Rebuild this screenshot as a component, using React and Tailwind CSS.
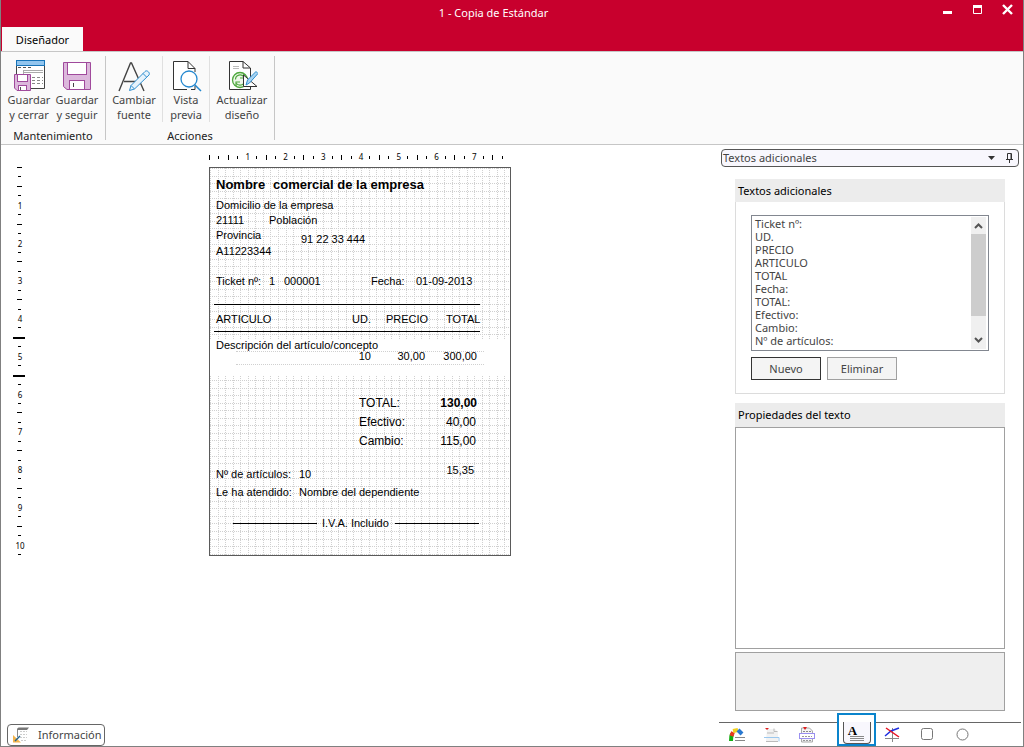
import { clsx } from 'clsx'

const MM = 3.775

const TICKET_ITEMS = [
  { text: 'Nombre', x: 6, y: 9, className: 'text-[13px] font-bold' },
  { text: 'comercial de la empresa', x: 63, y: 9, className: 'text-[13px] font-bold' },
  { text: 'Domicilio de la empresa', x: 6, y: 30 },
  { text: '21111', x: 6, y: 45 },
  { text: 'Población', x: 59, y: 45 },
  { text: 'Provincia', x: 6, y: 60 },
  { text: '91 22 33 444', x: 91, y: 64 },
  { text: 'A11223344', x: 6, y: 76 },
  { text: 'Ticket nº:', x: 6, y: 106 },
  { text: '1', x: 59, y: 106 },
  { text: '000001', x: 74, y: 106 },
  { text: 'Fecha:', x: 161, y: 106 },
  { text: '01-09-2013', x: 206, y: 106 },
  { text: 'ARTICULO', x: 6, y: 144 },
  { text: 'UD.', x: 142, y: 144 },
  { text: 'PRECIO', x: 176, y: 144 },
  { text: 'TOTAL', x: 236, y: 144 },
  { text: 'Descripción del artículo/concepto', x: 6, y: 170 },
  { text: '10', right: 139, y: 181 },
  { text: '30,00', right: 85, y: 181 },
  { text: '300,00', right: 33, y: 181 },
  { text: 'TOTAL:', x: 149, y: 228, className: 'text-[12px]' },
  { text: '130,00', right: 33, y: 228, className: 'text-[12px] font-bold' },
  { text: 'Efectivo:', x: 149, y: 247, className: 'text-[12px]' },
  { text: '40,00', right: 34, y: 247, className: 'text-[12px]' },
  { text: 'Cambio:', x: 149, y: 266, className: 'text-[12px]' },
  { text: '115,00', right: 34, y: 266, className: 'text-[12px]' },
  { text: '15,35', right: 36, y: 295 },
  { text: 'Nº de artículos:', x: 6, y: 299 },
  { text: '10', x: 89, y: 299 },
  { text: 'Le ha atendido:', x: 6, y: 317 },
  { text: 'Nombre del dependiente', x: 89, y: 317 },
  { text: 'I.V.A. Incluido', x: 112, y: 348 },
]

const TICKET_LINES = [
  { x: 4, y: 136, width: 266 },
  { x: 4, y: 163, width: 266 },
  { x: 23, y: 355, width: 84 },
  { x: 185, y: 355, width: 84 },
]

const TEXTS = [
  'Ticket nº:',
  'UD.',
  'PRECIO',
  'ARTICULO',
  'TOTAL',
  'Fecha:',
  'TOTAL:',
  'Efectivo:',
  'Cambio:',
  'Nº de artículos:',
]

function SaveCloseIcon() {
  return (
    <svg width="32" height="32" viewBox="0 0 32 32" fill="none">
      <path d="M3.5 5V28.5H31.5V5" fill="#fff" stroke="#444" />
      <rect x="3.5" y="0.5" width="28" height="5" fill="#92c5ee" stroke="#1874b8" />
      <path d="M5 7.5h3m2 0h3m2 0h3" stroke="#555" />
      <path d="M10 10.5H30M10 12.5H30M10.5 10V15" stroke="#aaa" />
      <path d="M19 17.5h3m2 0h3m2 0h1M19 20.5h3m2 0h3m2 0h1M19 23.5h3m2 0h3m2 0h1" stroke="#888" />
      <path d="M1.5 14.5H17.5V30.5H4L1.5 28Z" fill="#dcb8dc" stroke="#a04a9c" />
      <rect x="4.5" y="14.5" width="10" height="7" fill="#fff" stroke="#a04a9c" />
      <rect x="5.5" y="25.5" width="8" height="5" fill="#fff" stroke="#a04a9c" />
      <path d="M7.5 27v3" stroke="#555" />
    </svg>
  )
}

function SaveIcon() {
  return (
    <svg width="32" height="32" viewBox="0 0 32 32" fill="none">
      <path d="M2.5 2.5H29.5V29.5H6L2.5 26.5Z" fill="#dcb8dc" stroke="#a04a9c" />
      <rect x="6.5" y="2.5" width="19" height="12" fill="#fff" stroke="#a04a9c" />
      <rect x="8.5" y="20.5" width="15" height="9" fill="#fff" stroke="#a04a9c" />
      <path d="M12.5 23v4" stroke="#444" />
    </svg>
  )
}

function FontIcon() {
  return (
    <svg width="32" height="32" viewBox="0 0 32 32" fill="none">
      <path d="M1 31L12.5 3h1L26 31M6 21.5H20" stroke="#444" strokeWidth="1.4" />
      <path d="M11.5 30.5L13 25.500 27 11.500c1.500-2 5.500 1 4 3.500L16.500 29Z" fill="#e6f3fc" stroke="#2f8fd0" />
      <path d="M13 25.500l3.500 3.500M25 13.500l3.500 3.500" stroke="#2f8fd0" />
    </svg>
  )
}

function PreviewIcon() {
  return (
    <svg width="32" height="32" viewBox="0 0 32 32" fill="none">
      <path d="M17 29.5H3.5V1.5H18L25 8.5V12M25 26v3.5H21" fill="#fff" stroke="#333" />
      <path d="M18 1.5V8.5H25" stroke="#333" />
      <circle cx="19" cy="19" r="8" fill="#fff" stroke="#2488cf" strokeWidth="1.3" />
      <path d="M24.5 24.5L31 31" stroke="#2488cf" strokeWidth="1.5" />
    </svg>
  )
}

function RefreshIcon() {
  return (
    <svg width="32" height="32" viewBox="0 0 32 32" fill="none">
      <path d="M20 29.5H3.5V1.5H17L24.5 8V17" fill="#fff" stroke="#333" />
      <path d="M17 1.5V8h7" stroke="#333" />
      <path d="M7 6.5h6M7 8.5h6" stroke="#bbb" />
      <circle cx="14" cy="20" r="7.5" fill="#eef7ea" stroke="#4ea83d" strokeWidth="1.3" />
      <path d="M9.500 19.500c0-5 6-6 8.500-2.500M18 14v4h-4M18.500 21c0 4.500-6 5.500-8.500 2M10 26v-4h4" stroke="#4ea83d" strokeWidth="1.2" />
      <path d="M17.5 15V26.5H31Z" fill="#fff" stroke="#333" />
      <path d="M20 25l1.500-5L30 11.500l2 2L23.500 23Z" fill="#a8d3f2" stroke="#2f8fd0" />
      <path d="M18 29.5h6.500V26" stroke="#333" />
    </svg>
  )
}

function InfoIcon() {
  return (
    <svg width="18" height="18" viewBox="0 0 18 18" fill="none">
      <path d="M5 4c0-2 1-2.500 3-2.500h9L15 4Z" fill="#777" />
      <path d="M5.5 4V11" stroke="#888" />
      <path d="M8 5.5h7M8 8.5h7M8 11.5h7M9 14.5h6" stroke="#ccc" strokeDasharray="2 1" />
      <path d="M1 9v7.500h8Z" fill="#f3b44c" />
      <path d="M3 15l5-5" stroke="#23648f" strokeWidth="1.5" />
    </svg>
  )
}

function RibbonButton({ icon, lines, className }) {
  return (
    <button
      type="button"
      className={clsx('flex h-[66px] flex-col items-center pt-1 text-[#444]', className)}
    >
      {icon}
      <span className="leading-[15px]">
        {lines[0]}
        <br />
        {lines[1]}
      </span>
    </button>
  )
}

function RibbonGroup({ label, className, children }) {
  return (
    <section className={clsx('flex flex-col items-center border-r border-[#c6c6c6]', className)}>
      <div className="flex">{children}</div>
      <h2 className="mt-1.5 leading-[15px] text-[#222]">{label}</h2>
    </section>
  )
}

function TitleBar() {
  return (
    <header className="flex h-[51px] flex-col justify-between bg-[#c8002d]">
      <div className="flex items-start text-white">
        <h1 className="flex-1 pl-11 pt-[5px] text-center leading-4">1 - Copia de Estándar</h1>
        <div className="flex gap-[19px] pr-2.5 pt-1">
          <button type="button" aria-label="Minimizar">
            <svg width="11" height="11">
              <rect x="1" y="7" width="9" height="3" fill="#fff" />
            </svg>
          </button>
          <button type="button" aria-label="Maximizar">
            <svg width="11" height="11" fill="none">
              <path d="M1.5 1.5h8v8h-8z" stroke="#fff" />
              <path d="M1 2.5h9" stroke="#fff" strokeWidth="3" />
            </svg>
          </button>
          <button type="button" aria-label="Cerrar">
            <svg width="11" height="11" fill="none">
              <path d="M1 1l9 9M10 1l-9 9" stroke="#fff" strokeWidth="2.4" />
            </svg>
          </button>
        </div>
      </div>
      <nav className="flex">
        <button type="button" className="ml-px h-[24px] w-[81px] bg-[#fafafa] pt-0.5 text-black">
          Diseñador
        </button>
      </nav>
    </header>
  )
}

function Ribbon() {
  return (
    <div className="flex h-[94px] border-b border-t border-[#c6c6c6] bg-[#fafafa] py-1">
      <RibbonGroup label="Mantenimiento" className="px-1">
        <RibbonButton icon={<SaveCloseIcon />} lines={['Guardar', 'y cerrar']} className="w-[48px]" />
        <RibbonButton icon={<SaveIcon />} lines={['Guardar', 'y seguir']} className="w-[48px]" />
      </RibbonGroup>
      <RibbonGroup label="Acciones">
        <RibbonButton icon={<FontIcon />} lines={['Cambiar', 'fuente']} className="w-[57px] border-r border-[#e0e0e0]" />
        <RibbonButton icon={<PreviewIcon />} lines={['Vista', 'previa']} className="w-[47px] border-r border-[#e0e0e0]" />
        <RibbonButton icon={<RefreshIcon />} lines={['Actualizar', 'diseño']} className="w-[64px]" />
      </RibbonGroup>
    </div>
  )
}

function HorizontalRuler() {
  const ticks = Array.from({ length: 32 }, (_, i) => i)
  return (
    <svg className="block" width="302" height="12" fontFamily="Noto Sans, sans-serif" fontSize="8">
      {ticks.map(i => {
        const x = Math.round(i * 2.5 * MM)
        if (i % 4 === 0 && i > 0) {
          return null
        }
        return i % 2 === 0
          ? <rect key={i} x={x} y="3" width="1" height="5" />
          : <rect key={i} x={x} y="4" width="1" height="3" />
      })}
      {[1, 2, 3, 4, 5, 6, 7].map(n => (
        <text key={n} x={n * 10 * MM + 1} y="8" textAnchor="middle">{n}</text>
      ))}
    </svg>
  )
}

function VerticalRuler() {
  const ticks = Array.from({ length: 42 }, (_, i) => i)
  return (
    <svg className="block" width="14" height="392" fontFamily="Noto Sans, sans-serif" fontSize="8">
      {ticks.map(i => {
        const y = Math.round(i * 2.5 * MM)
        if (i % 4 === 0 && i > 0) {
          return null
        }
        if (i === 18 || i === 22) {
          return <rect key={i} x="0" y={y} width="12" height="2" />
        }
        return i % 2 === 0
          ? <rect key={i} x="4" y={y} width="5" height="1" />
          : <rect key={i} x="5" y={y} width="3" height="1" />
      })}
      {[1, 2, 3, 4, 5, 6, 7, 8, 9, 10].map(n => (
        <text key={n} x="7" y={n * 10 * MM + 4} textAnchor="middle">{n}</text>
      ))}
    </svg>
  )
}

function GridLines({ top, height, firstRow }) {
  const cols = Array.from({ length: 40 }, (_, i) => Math.round(i * 2 * MM) + 0.5)
  const rows = Array.from(
    { length: Math.ceil((height - firstRow) / (2 * MM)) },
    (_, i) => firstRow + Math.round(i * 2 * MM) + 0.5,
  )
  return (
    <svg className="absolute left-0" style={{ top }} width="300" height={height} stroke="#d0d0d0" strokeDasharray="1 1">
      {cols.map(x => <line key={x} x1={x} x2={x} y1="0" y2={height} />)}
      {rows.map(y => <line key={y} y1={y} y2={y} x1="0" x2="300" />)}
    </svg>
  )
}

function Ticket() {
  return (
    <div className="relative h-[389px] w-[302px] border border-[#5a5a5a] bg-white font-['Liberation_Sans',sans-serif] text-[11px] leading-[15px] text-black">
      <GridLines top={0} height={171} firstRow={0} />
      <GridLines top={208} height={179} firstRow={4} />
      <div className="absolute left-[26px] top-[183px] h-[14px] w-[248px] border-y border-dotted border-[#d0d0d0]" />
      {TICKET_LINES.map(line => (
        <div
          key={`${line.x}-${line.y}`}
          className="absolute h-px bg-black"
          style={{ left: line.x, top: line.y, width: line.width }}
        />
      ))}
      {TICKET_ITEMS.map(item => (
        <span
          key={`${item.text}-${item.y}`}
          className={clsx('absolute whitespace-pre', item.className)}
          style={{ left: item.x, right: item.right, top: item.y }}
        >
          {item.text}
        </span>
      ))}
    </div>
  )
}

function ScrollArrow({ down }) {
  return (
    <svg width="15" height="17" fill="none" stroke="#555" strokeWidth="2">
      <path d={down ? 'M4 6l3.500 3.500L11 6' : 'M4 11l3.500-3.500L11 11'} />
    </svg>
  )
}

function TextsPanel() {
  return (
    <section className="border border-[#dcdcdc]">
      <h3 className="-mx-px -mt-px h-[23px] bg-[#ececec] pl-[3px] leading-[23px] text-black">Textos adicionales</h3>
      <div className="px-[15px] py-[13px]">
        <div className="flex h-[136px] border border-[#828790] bg-white py-px pl-px pr-0.5">
          <ul className="flex-1 pl-0.5 leading-[13px] text-[#444]">
            {TEXTS.map(text => <li key={text}>{text}</li>)}
          </ul>
          <div className="flex w-[15px] flex-col bg-[#f0f0f0]">
            <ScrollArrow />
            <div className="h-[82px] bg-[#cdcdcd]" />
            <div className="mt-auto">
              <ScrollArrow down />
            </div>
          </div>
        </div>
        <div className="mt-1.5 flex gap-1.5">
          <button type="button" className="h-[23px] w-[70px] border border-[#333] bg-[#f4f4f4] pt-px">Nuevo</button>
          <button type="button" className="h-[23px] w-[70px] border border-[#a0a0a0] bg-[#f4f4f4] pt-px">Eliminar</button>
        </div>
      </div>
    </section>
  )
}

function ToolTabs() {
  return (
    <nav className="mr-0.5 flex h-6 items-start border-t border-[#666] pl-[9px]">
      <button type="button" aria-label="Datos" className="w-[35px] pt-1">
        <svg width="18" height="16" fill="none">
          <path d="M3 14c0-3 0-5 1-7" stroke="#12b012" strokeWidth="4" />
          <path d="M3.500 9L5 5" stroke="#e83a20" strokeWidth="4" />
          <path d="M5 4l5-1" stroke="#f0d020" strokeWidth="4" />
          <path d="M10 3l4 4" stroke="#2878d0" strokeWidth="4" />
          <path d="M7 10.5h10M7 13.5h10" stroke="#888" />
        </svg>
      </button>
      <button type="button" aria-label="Cabecera" className="w-[35px] pt-1">
        <svg width="18" height="16" fill="none">
          <path d="M4 2h8l3 3v9H3" fill="#f2f2f2" />
          <path d="M2 1h4l-2 2Z" fill="#e02020" />
          <path d="M11 1.5v3h3.500M4 6h7" stroke="#bbb" />
          <path d="M1 10.5h15v4" stroke="#9cc8ee" />
          <path d="M3 14.5h12" stroke="#bbb" />
        </svg>
      </button>
      <button type="button" aria-label="Sección" className="w-[39px] pt-1">
        <svg width="18" height="16" fill="none">
          <path d="M3.5 1V15h11V4l-3-3Z" fill="#f4f4f4" stroke="#aaa" />
          <path d="M5 0h4L7 3Z" fill="#e02020" />
          <path d="M5 4.5h8" stroke="#888" strokeDasharray="2 1" />
          <rect x="1.5" y="6.5" width="15" height="5" fill="#fff" stroke="#9a90f0" />
          <path d="M4 9.5h10M5 13.5h8" stroke="#999" strokeDasharray="2 1" />
        </svg>
      </button>
      <button
        type="button"
        aria-label="Textos"
        className="-mt-[10px] flex h-[33px] w-[39px] justify-center border-2 border-[#0a84cc] bg-white pt-[7px]"
      >
        <span className="flex h-[22px] w-7 flex-col items-center rounded-b border-x border-b border-[#555] bg-[#f8f7fd] pt-1 font-['Liberation_Serif',serif] text-[13px] font-bold leading-[10px] text-black">
          <span className="pr-2">A</span>
          <svg width="14" height="6" stroke="#888">
            <path d="M0 .5h14M0 2.5h14M0 4.5h14" />
          </svg>
        </span>
      </button>
      <button type="button" aria-label="Línea" className="ml-2 w-[37px] pt-1">
        <svg width="16" height="16" fill="none">
          <path d="M8.5 1v14M1 11.5h14" stroke="#888" />
          <path d="M1 9l6-5 8-3" stroke="#2030e0" strokeWidth="1.5" />
          <path d="M2 1l13 9" stroke="#e81020" strokeWidth="1.5" />
        </svg>
      </button>
      <button type="button" aria-label="Rectángulo" className="w-[35px] pt-[5px]">
        <svg width="13" height="13" fill="none">
          <rect x=".5" y=".5" width="11" height="11" rx="2" stroke="#777" />
        </svg>
      </button>
      <button type="button" aria-label="Elipse" className="pt-[5px]">
        <svg width="13" height="13" fill="none">
          <circle cx="6.5" cy="6.5" r="5.5" stroke="#777" />
        </svg>
      </button>
    </nav>
  )
}

function SidePanel() {
  return (
    <aside className="flex w-[304px] flex-col text-[#444]">
      <div className="ml-0.5 mr-1 mt-1 flex h-[18px] items-center rounded-sm border border-[#555] bg-[#f8f7fd] pl-px pr-[3px]">
        <h2 className="flex-1">Textos adicionales</h2>
        <button type="button" aria-label="Opciones">
          <svg width="9" height="6"><path d="M1 1h7L4.500 5Z" fill="#333" /></svg>
        </button>
        <button type="button" aria-label="Fijar" className="ml-[9px]">
          <svg width="10" height="10" fill="none" stroke="#333">
            <path d="M2.500 6V.5h4V6M1 6.5h7M4.500 7v3" />
            <path d="M6 1v5" />
          </svg>
        </button>
      </div>
      <div className="flex flex-1 flex-col pl-4 pr-[18px] pt-3">
        <TextsPanel />
        <h3 className="mt-[9px] h-[24px] bg-[#ececec] pl-[3px] leading-[24px] text-black">Propiedades del texto</h3>
        <div className="flex-1 border border-[#a0a0a0] bg-white" />
        <div className="mt-[3px] h-[59px] border border-[#a0a0a0] bg-[#efefef]" />
      </div>
      <div className="mt-[11px]">
        <ToolTabs />
      </div>
    </aside>
  )
}

export default function App() {
  return (
    <div className="flex min-h-screen flex-col border-x border-b border-[#808080] bg-white font-['Noto_Sans',sans-serif] text-[11px]">
      <TitleBar />
      <Ribbon />
      <main className="flex flex-1">
        <div className="flex flex-1 flex-col justify-between">
          <div className="flex">
            <div className="pl-3 pt-[22px]">
              <VerticalRuler />
            </div>
            <div className="ml-[182px] pt-[7px]">
              <HorizontalRuler />
              <div className="mt-[3px]">
                <Ticket />
              </div>
            </div>
          </div>
          <button
            type="button"
            className="ml-1.5 flex h-[22px] w-[98px] items-center gap-2 rounded-sm border border-[#666] bg-white pl-1 text-[#444]"
          >
            <InfoIcon />
            Información
          </button>
        </div>
        <SidePanel />
      </main>
    </div>
  )
}
